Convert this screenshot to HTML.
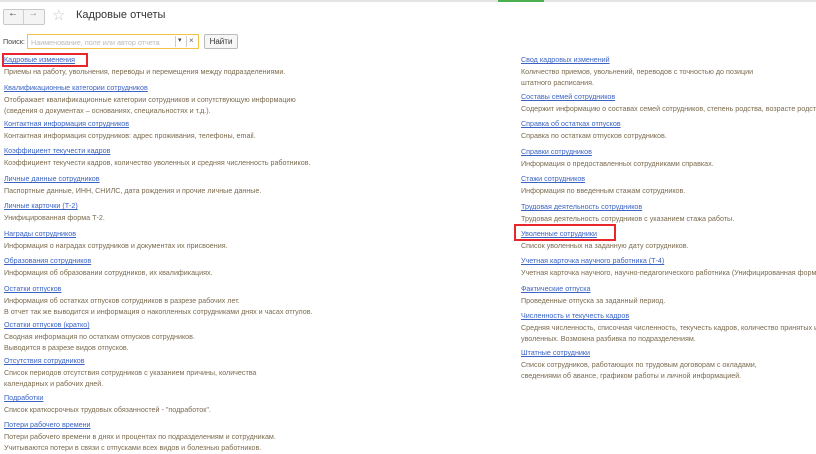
<!DOCTYPE html>
<html><head><meta charset="utf-8"><style>
html,body{margin:0;width:816px;height:454px;overflow:hidden}
body{background:#fff;position:relative;font-family:"Liberation Sans","DejaVu Sans",sans-serif;}
.a{position:absolute;font-size:7.15px;color:#3b63c4;text-decoration:underline;white-space:nowrap;line-height:10px}
.d{position:absolute;font-size:7.15px;color:#7b6b4f;white-space:nowrap;line-height:11px}
.box{position:absolute;border:2px solid #e8262b;box-sizing:border-box}
#w{position:absolute;left:0;top:0;width:816px;height:454px;overflow:hidden}
</style></head><body><div id="w">
<div style="position:absolute;left:0;top:0;width:816px;height:2px;background:#e4e4e4"></div>
<div style="position:absolute;left:498px;top:0;width:46px;height:2px;background:#4caf50"></div>
<div style="position:absolute;left:3px;top:9px;width:40px;height:14px;border:1px solid #c8c8c8;border-radius:2px;background:#f4f4f4"></div>
<div style="position:absolute;left:23px;top:10px;width:1px;height:14px;background:#d0d0d0"></div>
<div style="position:absolute;left:8px;top:8px;font-size:10px;color:#333">&#8592;</div>
<div style="position:absolute;left:28px;top:8px;font-size:10px;color:#999">&#8594;</div>
<div style="position:absolute;left:52px;top:6px;font-size:15px;color:#c8c8c8">&#9734;</div>
<div style="position:absolute;left:76px;top:9px;font-size:11px;color:#333">Кадровые отчеты</div>
<div style="position:absolute;left:3px;top:37px;font-size:7.2px;color:#444">Поиск:</div>
<div style="position:absolute;left:27px;top:34px;width:172px;height:15px;border:1px solid #f2c34a;box-sizing:border-box;background:#fff"></div>
<div style="position:absolute;left:31px;top:38px;font-size:7.2px;color:#bbb">Наименование, поле или автор отчета</div>
<div style="position:absolute;left:175px;top:36px;width:1px;height:11px;background:#ccc"></div>
<div style="position:absolute;left:186px;top:36px;width:1px;height:11px;background:#ccc"></div>
<div style="position:absolute;left:178px;top:36px;font-size:7px;color:#444">▾</div>
<div style="position:absolute;left:189px;top:36px;font-size:8px;color:#666">×</div>
<div style="position:absolute;left:204px;top:34px;width:34px;height:15px;border:1px solid #bbb;border-radius:2px;box-sizing:border-box;background:#f6f6f6;font-size:8px;color:#333;text-align:center;line-height:13px">Найти</div>
<div class="box" style="left:2px;top:53px;width:86px;height:14px"></div>
<div class="box" style="left:514px;top:224px;width:102px;height:17px"></div>

<div class="a" style="left:4px;top:55px">Кадровые изменения</div>
<div class="d" style="left:4px;top:67px">Приемы на работу, увольнения, переводы и перемещения между подразделениями.</div>
<div class="a" style="left:4px;top:83px">Квалификационные категории сотрудников</div>
<div class="d" style="left:4px;top:95px">Отображает квалификационные категории сотрудников и сопутствующую информацию<br>(сведения о документах – основаниях, специальностях и т.д.).</div>
<div class="a" style="left:4px;top:119px">Контактная информация сотрудников</div>
<div class="d" style="left:4px;top:131px">Контактная информация сотрудников: адрес проживания, телефоны, email.</div>
<div class="a" style="left:4px;top:146px">Коэффициент текучести кадров</div>
<div class="d" style="left:4px;top:158px">Коэффициент текучести кадров, количество уволенных и средняя численность работников.</div>
<div class="a" style="left:4px;top:174px">Личные данные сотрудников</div>
<div class="d" style="left:4px;top:186px">Паспортные данные, ИНН, СНИЛС, дата рождения и прочие личные данные.</div>
<div class="a" style="left:4px;top:201px">Личные карточки (Т-2)</div>
<div class="d" style="left:4px;top:213px">Унифицированная форма Т-2.</div>
<div class="a" style="left:4px;top:229px">Награды сотрудников</div>
<div class="d" style="left:4px;top:241px">Информация о наградах сотрудников и документах их присвоения.</div>
<div class="a" style="left:4px;top:256px">Образования сотрудников</div>
<div class="d" style="left:4px;top:268px">Информация об образовании сотрудников, их квалификациях.</div>
<div class="a" style="left:4px;top:284px">Остатки отпусков</div>
<div class="d" style="left:4px;top:296px">Информация об остатках отпусков сотрудников в разрезе рабочих лет.<br>В отчет так же выводится и информация о накопленных сотрудниками днях и часах отгулов.</div>
<div class="a" style="left:4px;top:320px">Остатки отпусков (кратко)</div>
<div class="d" style="left:4px;top:332px">Сводная информация по остаткам отпусков сотрудников.<br>Выводится в разрезе видов отпусков.</div>
<div class="a" style="left:4px;top:356px">Отсутствия сотрудников</div>
<div class="d" style="left:4px;top:368px">Список периодов отсутствия сотрудников с указанием причины, количества<br>календарных и рабочих дней.</div>
<div class="a" style="left:4px;top:393px">Подработки</div>
<div class="d" style="left:4px;top:405px">Список краткосрочных трудовых обязанностей - "подработок".</div>
<div class="a" style="left:4px;top:420px">Потери рабочего времени</div>
<div class="d" style="left:4px;top:432px">Потери рабочего времени в днях и процентах по подразделениям и сотрудникам.<br>Учитываются потери в связи с отпусками всех видов и болезнью работников.</div>

<div class="a" style="left:521px;top:55px">Свод кадровых изменений</div>
<div class="d" style="left:521px;top:67px">Количество приемов, увольнений, переводов с точностью до позиции<br>штатного расписания.</div>
<div class="a" style="left:521px;top:92px">Составы семей сотрудников</div>
<div class="d" style="left:521px;top:104px">Содержит информацию о составах семей сотрудников, степень родства, возрасте родственников.</div>
<div class="a" style="left:521px;top:119px">Справка об остатках отпусков</div>
<div class="d" style="left:521px;top:131px">Справка по остаткам отпусков сотрудников.</div>
<div class="a" style="left:521px;top:147px">Справки сотрудников</div>
<div class="d" style="left:521px;top:159px">Информация о предоставленных сотрудниками справках.</div>
<div class="a" style="left:521px;top:174px">Стажи сотрудников</div>
<div class="d" style="left:521px;top:186px">Информация по введенным стажам сотрудников.</div>
<div class="a" style="left:521px;top:202px">Трудовая деятельность сотрудников</div>
<div class="d" style="left:521px;top:214px">Трудовая деятельность сотрудников с указанием стажа работы.</div>
<div class="a" style="left:521px;top:229px">Уволенные сотрудники</div>
<div class="d" style="left:521px;top:241px">Список уволенных на заданную дату сотрудников.</div>
<div class="a" style="left:521px;top:256px">Учетная карточка научного работника (Т-4)</div>
<div class="d" style="left:521px;top:268px">Учетная карточка научного, научно-педагогического работника (Унифицированная форма Т-4).</div>
<div class="a" style="left:521px;top:284px">Фактические отпуска</div>
<div class="d" style="left:521px;top:296px">Проведенные отпуска за заданный период.</div>
<div class="a" style="left:521px;top:311px">Численность и текучесть кадров</div>
<div class="d" style="left:521px;top:323px">Средняя численность, списочная численность, текучесть кадров, количество принятых и<br>уволенных. Возможна разбивка по подразделениям.</div>
<div class="a" style="left:521px;top:348px">Штатные сотрудники</div>
<div class="d" style="left:521px;top:360px">Список сотрудников, работающих по трудовым договорам с окладами,<br>сведениями об авансе, графиком работы и личной информацией.</div>
</div></body></html>
